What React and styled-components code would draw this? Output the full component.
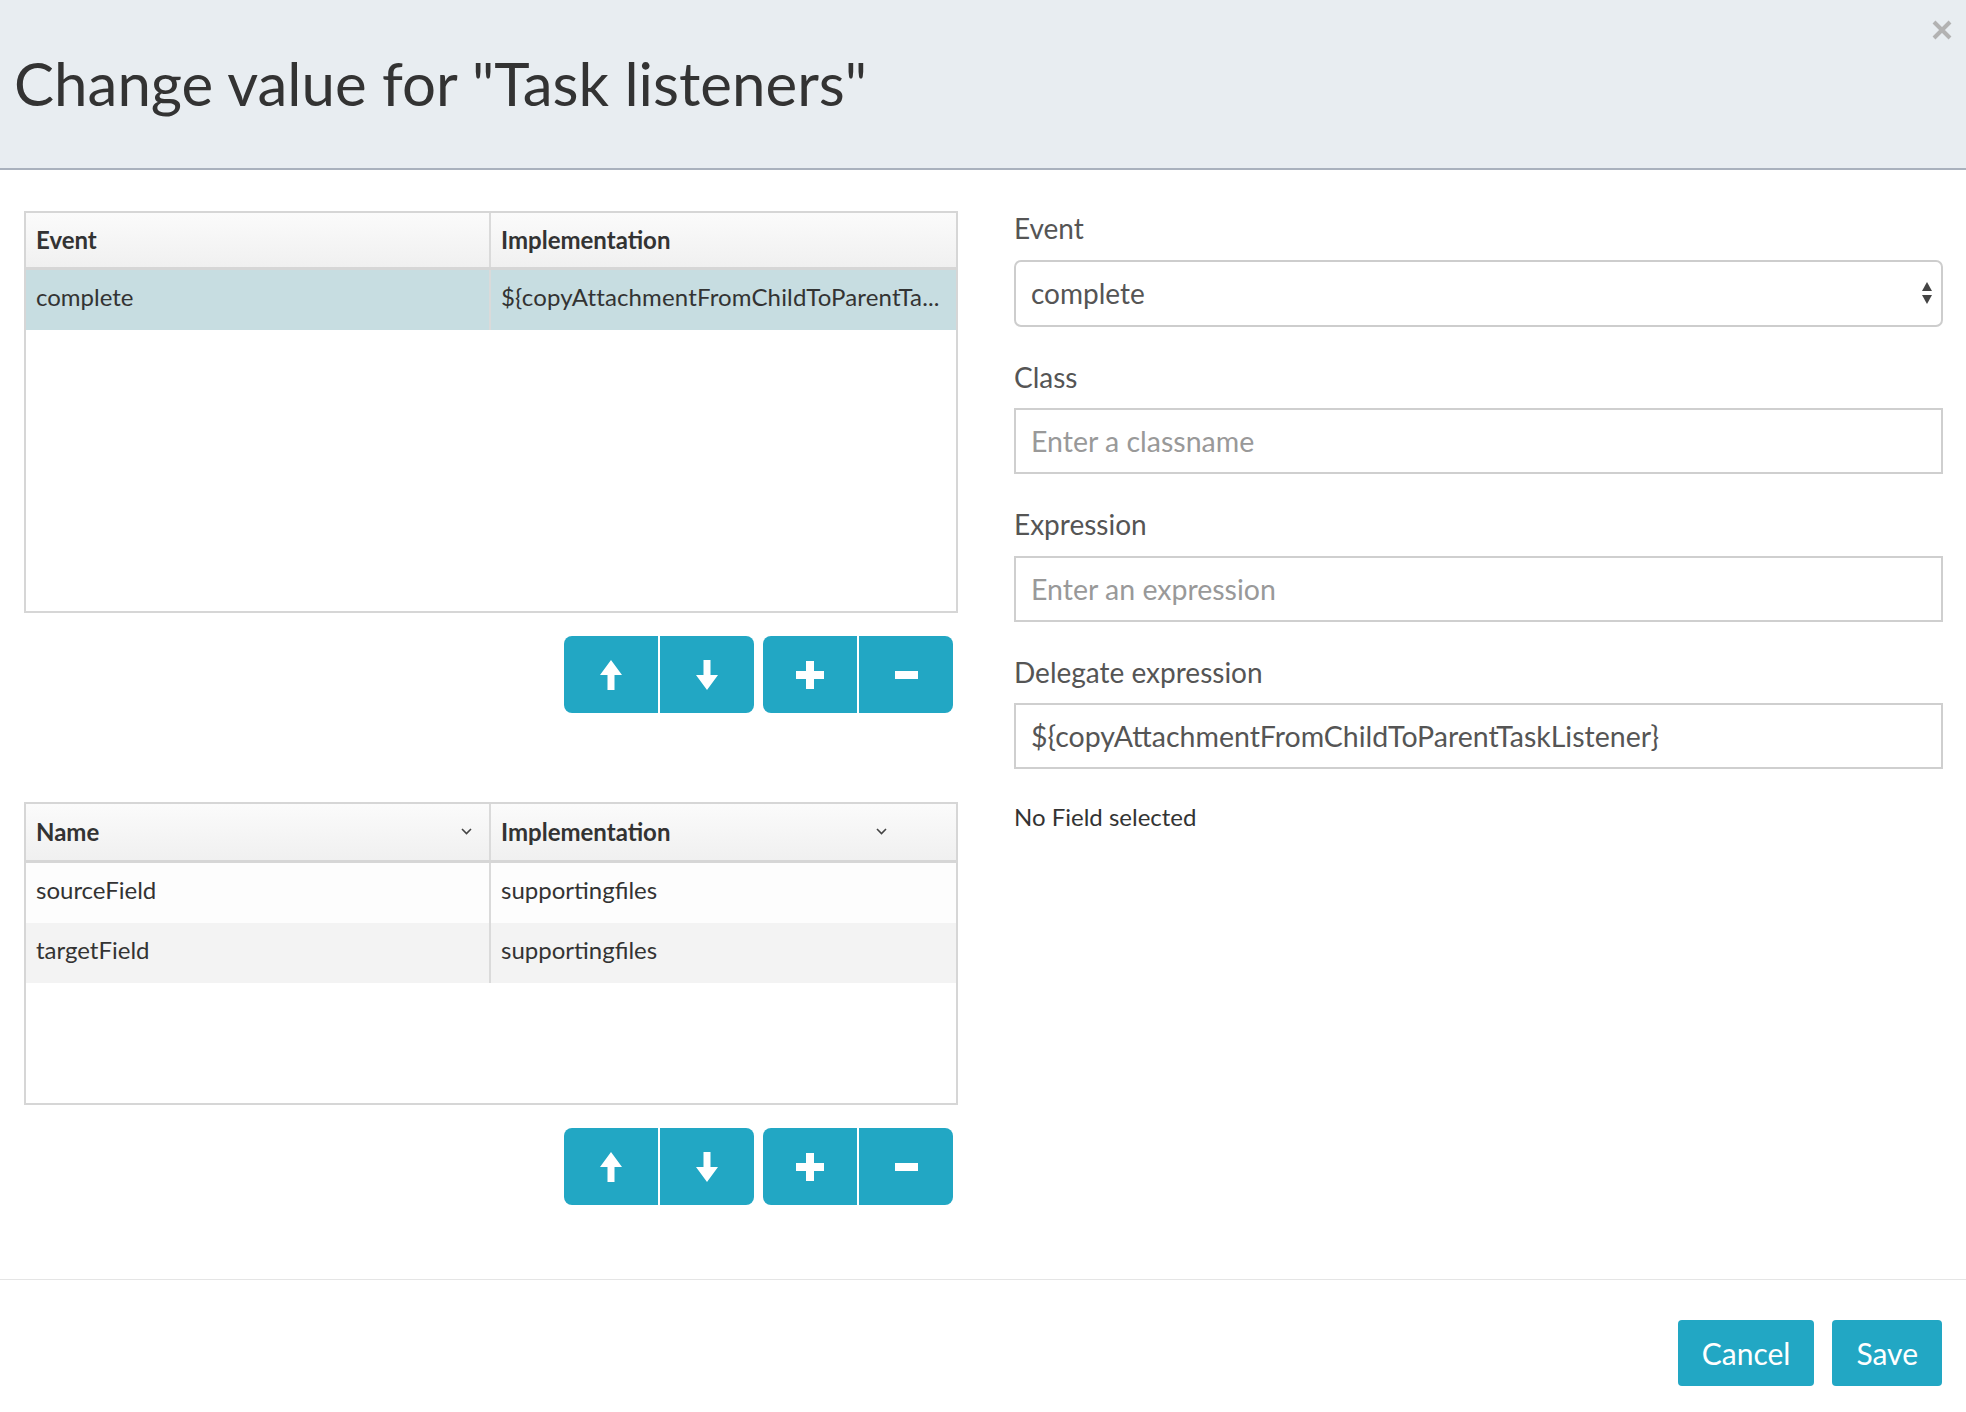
import React from "react";
import styled, { createGlobalStyle } from "styled-components";

const Global = createGlobalStyle`
  html, body { margin: 0; padding: 0; background: #fff; }
  body { font-family: Lato, "Open Sans", "Liberation Sans", sans-serif; color: #333; }
  * { box-sizing: border-box; }
`;

const Modal = styled.div`
  width: 1966px;
  height: 1412px;
  display: flex;
  flex-direction: column;
  background: #fff;
  overflow: hidden;
`;

const Header = styled.header`
  position: relative;
  height: 170px;
  background: #e8edf1;
  border-bottom: 2px solid #a9b1bd;
  display: flex;
  align-items: center;
  padding: 0 0 3px 14px;
`;

const Title = styled.h2`
  margin: 0;
  font-size: 60px;
  line-height: 1;
  font-weight: 400;
  color: #333;
`;

const CloseButton = styled.button`
  position: absolute;
  top: 18px;
  right: 12px;
  width: 24px;
  height: 24px;
  padding: 0;
  border: 0;
  background: transparent;
  display: flex;
  align-items: center;
  justify-content: center;
`;

const Body = styled.div`
  display: grid;
  grid-template-columns: 934px 1fr;
  column-gap: 56px;
  padding: 41px 23px 0 24px;
`;

const LeftColumn = styled.div`
  display: flex;
  flex-direction: column;
`;

const Grid = styled.div`
  height: ${(p) => p.$height}px;
  border: 2px solid #d6d6d6;
  margin-top: ${(p) => p.$mt || 0}px;
  display: flex;
  flex-direction: column;
  background: #fff;
`;

const Row = styled.div`
  display: grid;
  grid-template-columns: 465px 1fr;
  height: ${(p) => p.$h}px;
  background: ${(p) => p.$bg || "transparent"};
  ${(p) => (p.$head ? "border-bottom: 3px solid #d6d6d6;" : "")}
  ${(p) =>
    p.$head ? "background: linear-gradient(to bottom, #fbfbfb 0%, #f0f0f0 100%);" : ""}
`;

const Cell = styled.div`
  display: flex;
  align-items: center;
  padding: 0 10px ${(p) => (p.$head ? "1px" : "8px")} 10px;
  font-size: 24px;
  font-weight: ${(p) => (p.$head ? 700 : 400)};
  color: #333;
  white-space: nowrap;
  overflow: hidden;
  ${(p) => (p.$first ? "border-right: 2px solid #dadada;" : "")}
  position: relative;
`;

const CellText = styled.span`
  overflow: hidden;
  text-overflow: ellipsis;
  white-space: nowrap;
  letter-spacing: 0.15px;
`;

const Chevron = styled.svg`
  position: absolute;
  right: ${(p) => p.$right}px;
  top: 50%;
  margin-top: -4px;
`;

const Toolbar = styled.div`
  display: flex;
  justify-content: flex-end;
  gap: 9px;
  margin-top: 23px;
  padding-right: 5px;
`;

const BtnGroup = styled.div`
  display: flex;
  gap: 2px;
`;

const IconButton = styled.button`
  width: 94px;
  height: 77px;
  border: 0;
  padding: 0;
  background: #22a7c4;
  display: flex;
  align-items: center;
  justify-content: center;
  border-radius: ${(p) => (p.$side === "left" ? "8px 0 0 8px" : "0 8px 8px 0")};
`;

const Form = styled.div`
  display: flex;
  flex-direction: column;
  padding-top: 1px;
`;

const Field = styled.div`
  display: flex;
  flex-direction: column;
  margin-bottom: 34px;
`;

const Label = styled.label`
  font-size: 28px;
  line-height: 1.2;
  color: #555;
  margin-bottom: 14px;
`;

const SelectBox = styled.div`
  position: relative;
  height: 67px;
  border: 2px solid #cdcdcd;
  border-radius: 7px;
  background: #fff;
  display: flex;
  align-items: center;
  padding-left: 15px;
  font-size: 28px;
  color: #555;
`;

const SelectArrows = styled.svg`
  position: absolute;
  right: 8px;
  top: 50%;
  margin-top: -12px;
`;

const Input = styled.input`
  height: 66px;
  border: 2px solid #cfcfcf;
  border-radius: 0;
  padding: 0 15px;
  font-family: Lato, "Open Sans", "Liberation Sans", sans-serif;
  font-size: 28.5px;
  color: #555;
  background: #fff;
  outline: none;
  &::placeholder { color: #999; }
`;

const Note = styled.div`
  font-size: 24px;
  line-height: 1.2;
  color: #333;
  margin-top: 0;
`;

const Footer = styled.footer`
  margin-top: auto;
  border-top: 1px solid #e5e5e5;
  padding: 40px 24px 26px 0;
  display: flex;
  justify-content: flex-end;
  gap: 18px;
`;

const FooterButton = styled.button`
  height: 66px;
  padding: 0 ${(p) => p.$px}px;
  border: 0;
  border-radius: 4px;
  background: #22a7c4;
  color: #fff;
  font-family: Lato, "Open Sans", "Liberation Sans", sans-serif;
  font-size: 30px;
  font-weight: 400;
`;

const ArrowUp = () => (
  <svg width="22" height="30" viewBox="0 0 22 30">
    <polygon points="11,0 22,15 14.5,15 14.5,30 7.5,30 7.5,15 0,15" fill="#fff" />
  </svg>
);
const ArrowDown = () => (
  <svg width="22" height="30" viewBox="0 0 22 30">
    <polygon points="7.5,0 14.5,0 14.5,15 22,15 11,30 0,15 7.5,15" fill="#fff" />
  </svg>
);
const Plus = () => (
  <svg width="28" height="28" viewBox="0 0 28 28">
    <path d="M10 0h8v10h10v8H18v10h-8V18H0v-8h10z" fill="#fff" />
  </svg>
);
const Minus = () => (
  <svg width="23" height="8" viewBox="0 0 23 8">
    <rect width="23" height="8" fill="#fff" />
  </svg>
);

const ButtonBar = () => (
  <Toolbar>
    <BtnGroup>
      <IconButton $side="left" aria-label="Move up"><ArrowUp /></IconButton>
      <IconButton $side="right" aria-label="Move down"><ArrowDown /></IconButton>
    </BtnGroup>
    <BtnGroup>
      <IconButton $side="left" aria-label="Add"><Plus /></IconButton>
      <IconButton $side="right" aria-label="Remove"><Minus /></IconButton>
    </BtnGroup>
  </Toolbar>
);

const ChevronIcon = ({ right }) => (
  <Chevron $right={right} width="11" height="7" viewBox="0 0 11 7">
    <polyline points="1,1 5.5,5.5 10,1" fill="none" stroke="#444" strokeWidth="1.6" />
  </Chevron>
);

const fieldRows = [
  { name: "sourceField", impl: "supportingfiles", bg: "#fdfdfd" },
  { name: "targetField", impl: "supportingfiles", bg: "#f3f3f3" },
];

export default function App() {
  return (
    <>
      <Global />
      <Modal>
        <Header>
          <Title>Change value for "Task listeners"</Title>
          <CloseButton aria-label="Close">
            <svg width="20" height="20" viewBox="0 0 20 20">
              <path d="M2 2L18 18M18 2L2 18" stroke="#b2b2b2" strokeWidth="4" />
            </svg>
          </CloseButton>
        </Header>
        <Body>
          <LeftColumn>
            <Grid $height={402}>
              <Row $head $h={57}>
                <Cell $head $first>Event</Cell>
                <Cell $head>Implementation</Cell>
              </Row>
              <Row $h={60} $bg="#c7dde1">
                <Cell $first>complete</Cell>
                <Cell><CellText>${"{"}copyAttachmentFromChildToParentTa...</CellText></Cell>
              </Row>
            </Grid>
            <ButtonBar />
            <Grid $height={303} $mt={89}>
              <Row $head $h={59}>
                <Cell $head $first>
                  Name
                  <ChevronIcon right={17} />
                </Cell>
                <Cell $head>
                  Implementation
                  <ChevronIcon right={69} />
                </Cell>
              </Row>
              {fieldRows.map((r) => (
                <Row key={r.name} $h={60} $bg={r.bg}>
                  <Cell $first>{r.name}</Cell>
                  <Cell>{r.impl}</Cell>
                </Row>
              ))}
            </Grid>
            <ButtonBar />
          </LeftColumn>
          <Form>
            <Field>
              <Label>Event</Label>
              <SelectBox>
                complete
                <SelectArrows width="12" height="24" viewBox="0 0 12 24">
                  <polygon points="6,1 11,10 1,10" fill="#444" />
                  <polygon points="1,14 11,14 6,23" fill="#444" />
                </SelectArrows>
              </SelectBox>
            </Field>
            <Field>
              <Label>Class</Label>
              <Input placeholder="Enter a classname" />
            </Field>
            <Field>
              <Label>Expression</Label>
              <Input placeholder="Enter an expression" />
            </Field>
            <Field>
              <Label>Delegate expression</Label>
              <Input defaultValue="${copyAttachmentFromChildToParentTaskListener}" />
            </Field>
            <Note>No Field selected</Note>
          </Form>
        </Body>
        <Footer>
          <FooterButton $px={24}>Cancel</FooterButton>
          <FooterButton $px={24}>Save</FooterButton>
        </Footer>
      </Modal>
    </>
  );
}
